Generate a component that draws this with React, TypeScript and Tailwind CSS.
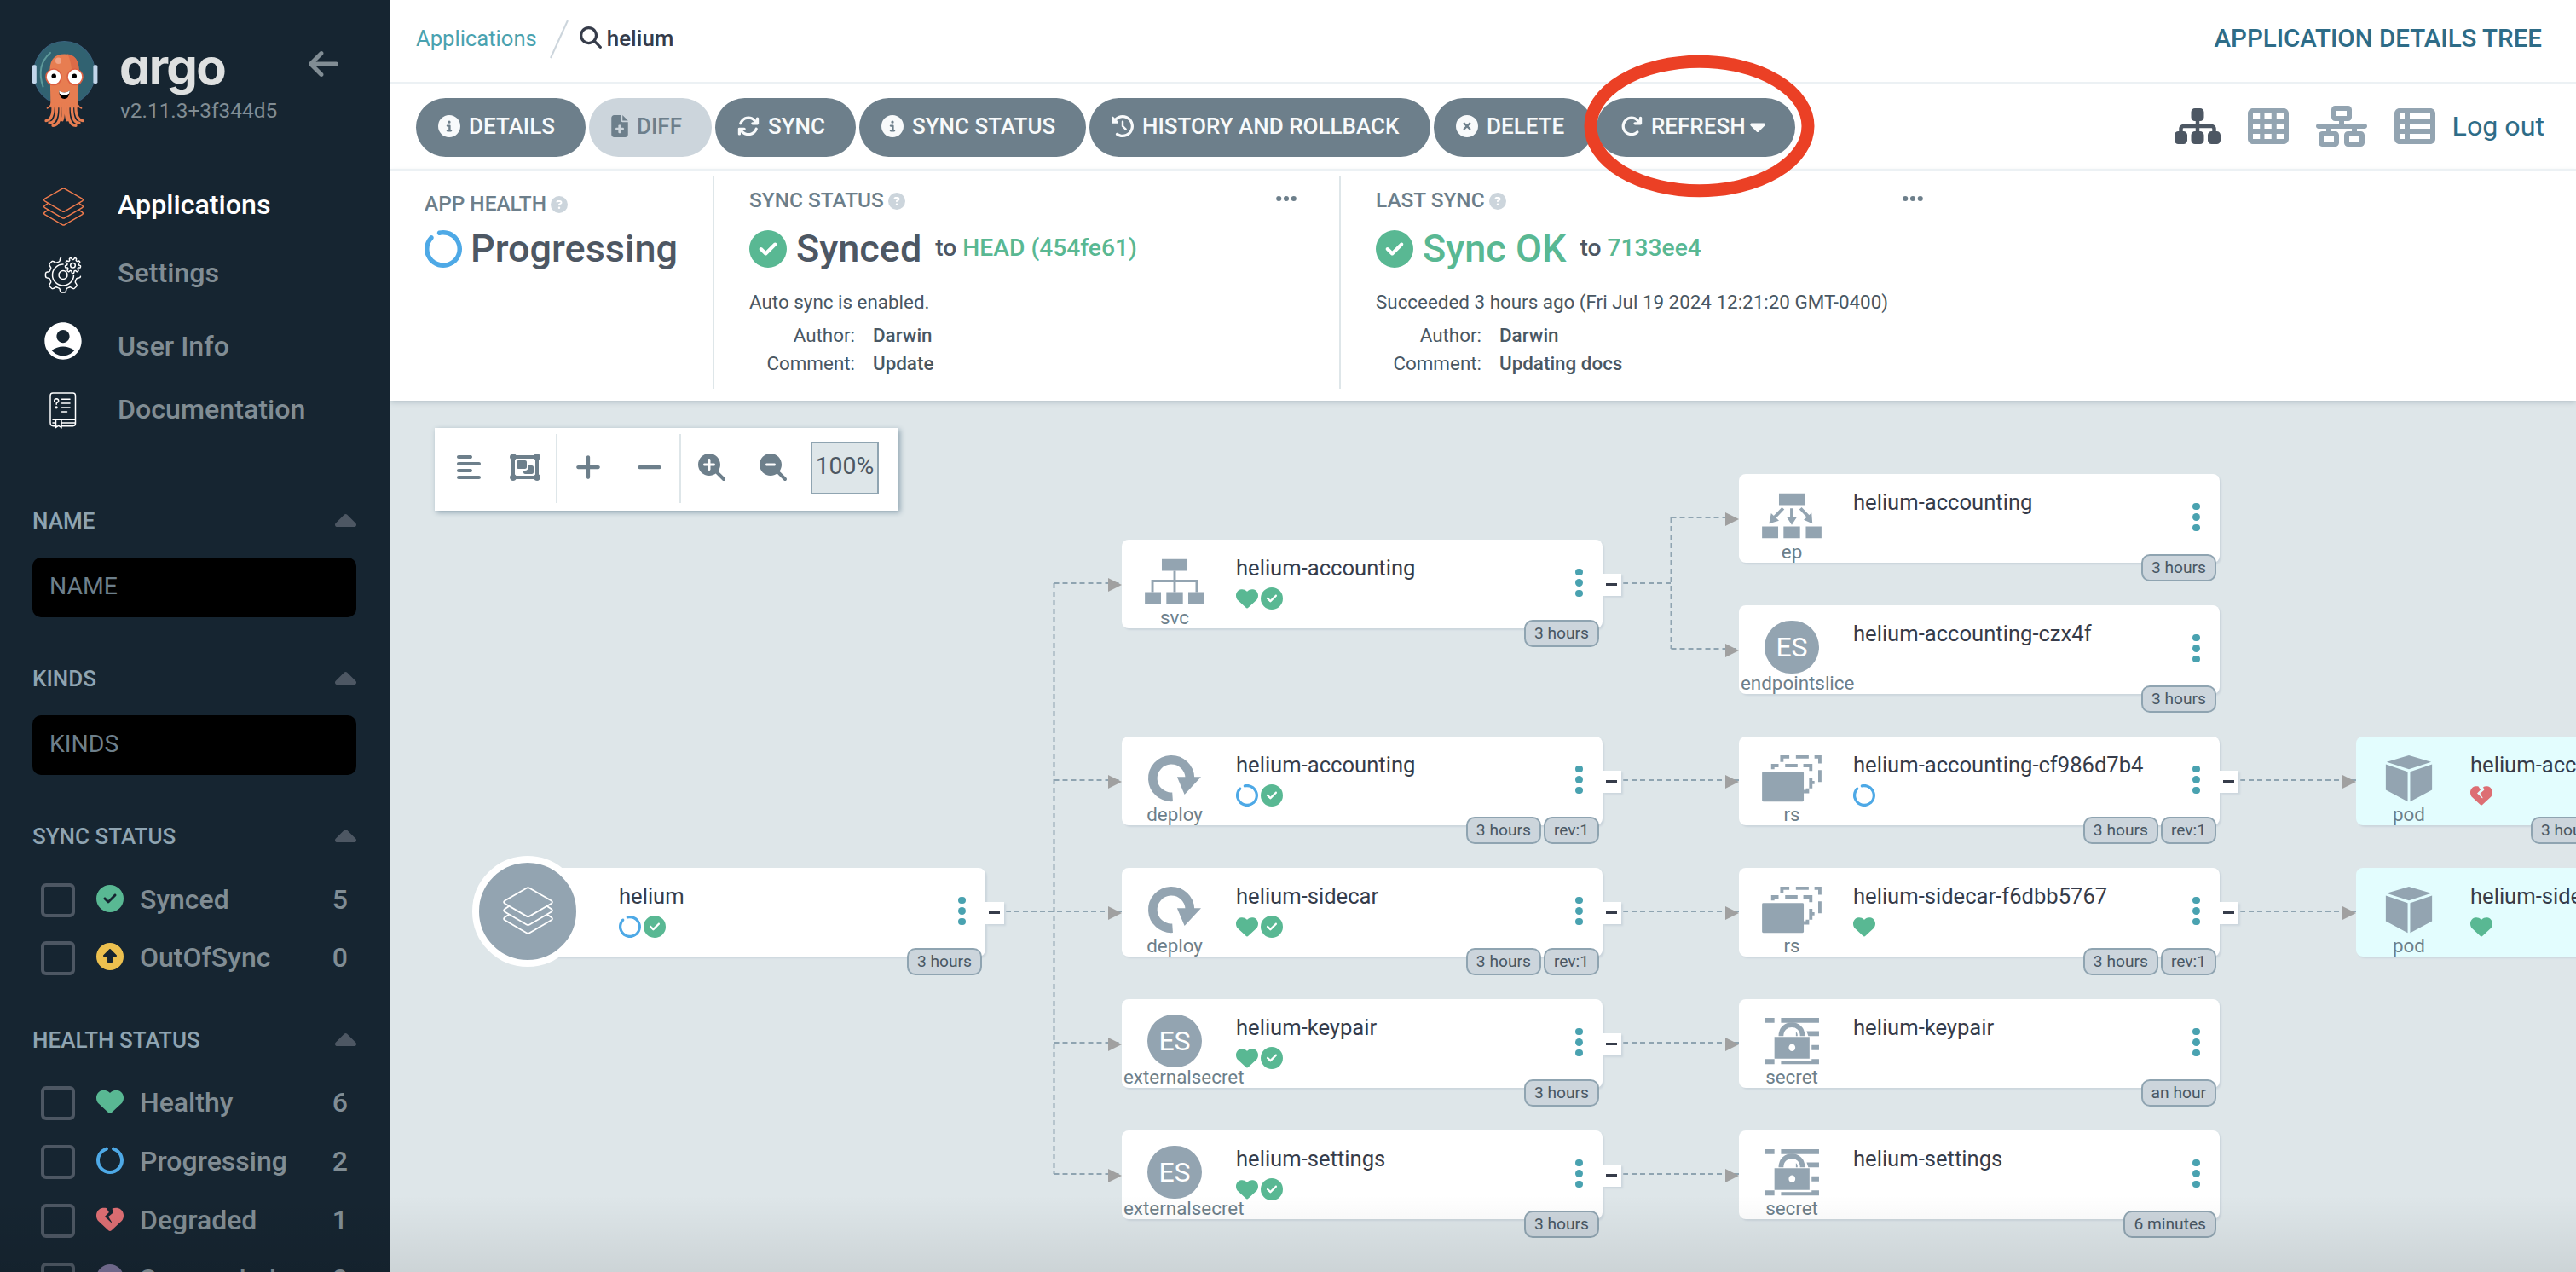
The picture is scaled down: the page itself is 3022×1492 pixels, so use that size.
import type { ReactNode } from 'react';
import {
  FaAlignLeft, FaArrowLeft, FaArrowRotateRight, FaArrowsRotate, FaCaretDown, FaCaretUp, FaCircleCheck,
  FaCircleInfo, FaCircleNotch, FaCircleQuestion, FaCircleUp, FaCirclePause, FaCircleXmark, FaClockRotateLeft,
  FaEllipsis, FaFileMedical, FaHeart, FaHeartCrack, FaMagnifyingGlass, FaMagnifyingGlassMinus,
  FaMagnifyingGlassPlus, FaMinus, FaNetworkWired, FaObjectGroup, FaPlus, FaSitemap, FaTableCells, FaTableList,
} from 'react-icons/fa6';
import { MdAccountCircle } from 'react-icons/md';

/* ---------- shared drawings ---------- */

function Layers({ className }: { className: string }) {
  return (
    <svg viewBox="0 0 46 44" className={className} fill="none" stroke="currentColor" strokeWidth="1.4" strokeLinejoin="round">
      <path d="M21.6 1.3 Q23 .5 24.4 1.3 L44.5 12.9 Q46.2 14.2 44.5 15.5 L24.4 27.2 Q23 28 21.6 27.2 L1.5 15.5 Q-.2 14.2 1.5 12.9 Z" />
      <path d="M5.4 18 L1.5 20.6 Q-.2 21.9 1.5 23.2 L21.6 34.9 Q23 35.7 24.4 34.9 L44.5 23.2 Q46.2 21.9 44.5 20.6 L40.6 18" />
      <path d="M5.4 25.7 L1.5 28.3 Q-.2 29.6 1.5 30.9 L21.6 42.6 Q23 43.4 24.4 42.6 L44.5 30.9 Q46.2 29.6 44.5 28.3 L40.6 25.7" />
    </svg>
  );
}

function gearPath(cx: number, cy: number, r: number, amp: number, teeth: number, from: number, to: number, phase: number) {
  const pts: string[] = [];
  for (let a = from; a <= to; a += 2) {
    const t = (a * Math.PI) / 180;
    const k = Math.tanh(2.6 * Math.cos(teeth * (t - phase)));
    const rad = r + amp * k;
    pts.push(`${(cx + rad * Math.cos(t)).toFixed(2)} ${(cy + rad * Math.sin(t)).toFixed(2)}`);
  }
  return 'M' + pts.join('L');
}

function Gears() {
  return (
    <svg viewBox="0 0 44 44" className="h-[44px] w-[44px]" fill="none" stroke="#fff" strokeWidth="1.5" strokeLinecap="round" strokeLinejoin="round">
      <path d={gearPath(22, 22.5, 18.4, 2.2, 8, 5, 264, Math.PI / 2)} />
      <path d="M22 10 A12.5 12.5 0 1 0 34.5 22.5" />
      <circle cx="22" cy="22.5" r="5" />
      <path d={gearPath(33.5, 11.3, 7.9, 1.2, 9, 0, 360, Math.PI / 2)} />
      <circle cx="33.5" cy="11.3" r="2.8" />
    </svg>
  );
}

function Manual() {
  return (
    <svg viewBox="0 0 32 42" preserveAspectRatio="none" className="h-[43px] w-[32px]" fill="none" stroke="#fff" strokeWidth="1.5" strokeLinecap="round">
      <path d="M4 31.5H30.5V4Q30.5 1 27.5 1H4Q1 1 1 4V35Q1 38.7 4.5 38.7H8M14 38.7H27.5Q30.5 38.7 30.5 35.7V31" />
      <path d="M7.5 31.8V40.5L10.7 38.5L14 40.5V31.8M14 35.2H30M4 35.2H7.5" />
      <path d="M14.5 8H24M14.5 12.8H24M14.5 17.6H24M14.5 22.4H20.5" />
      <path d="M5.7 10.2Q5.7 7.6 8.3 7.6Q10.8 7.8 10.7 10Q10.4 11.6 8.2 12.6V14" />
      <circle cx="8.1" cy="17.4" r=".9" fill="#fff" />
    </svg>
  );
}

function Mascot() {
  return (
    <svg viewBox="37 45 79 99" preserveAspectRatio="none" className="h-[102px] w-[79px]">
      <circle cx="75.5" cy="82.5" r="36" fill="#316271" stroke="#3b6480" strokeWidth="1" />
      <rect x="37.8" y="73.5" width="5" height="21" rx="1.6" fill="#c3d6ea" />
      <rect x="109.4" y="73.5" width="5" height="21" rx="1.6" fill="#c3d6ea" />
      <path d="M59 59.5Q42 74 50.5 98" fill="none" stroke="#5f9a9b" strokeWidth="2" strokeLinecap="round" />
      <path d="M58.5 78Q59 61 75.5 61Q92 61 92.5 78L91.5 122H59.5Z" fill="#e77d51" />
      <path d="M79 61Q92 62.500 92.500 78L92 90H85Q84 68 79 61Z" fill="#dd6b47" />
      <circle cx="68.500" cy="68.500" r="3.600" fill="#f0a386" />
      <g fill="none" stroke="#e77d51" strokeWidth="3.300" strokeLinecap="round">
        <path d="M61 112Q61 121 55.500 122.500" strokeWidth="1.8" />
        <path d="M90 112Q90 121 95.500 122.500" strokeWidth="1.8" />
        <path d="M62 118Q63 136 54 136.800" />
        <path d="M66.500 118Q67.500 139 58 139.400" />
        <path d="M71 118Q72.500 142 62 142.300" />
        <path d="M80 118Q78.500 142 89 142.300" />
        <path d="M84.500 118Q83.500 139 93 139.400" />
        <path d="M89 118Q88 136 97 136.800" />
        <path d="M74.500 118Q75 130 73 136" />
        <path d="M77.500 118Q76.500 130 79 136" />
      </g>
      <circle cx="63" cy="87" r="9" fill="#fff" stroke="#dc5f41" strokeWidth="1.6" />
      <circle cx="88" cy="87" r="9" fill="#fff" stroke="#dc5f41" strokeWidth="1.6" />
      <circle cx="63.200" cy="86" r="2.700" />
      <circle cx="87.300" cy="86" r="2.700" />
      <path d="M69 102.500Q75.500 107 82 102.500Q81 112 75.500 112Q70 112 69 102.500Z" />
      <path d="M69 102.500Q75.500 107 82 102.500L81 106Q75.500 110 70 106Z" fill="#fff" />
    </svg>
  );
}

/* ---------- sidebar ---------- */

function NavRow({ icon, label, className, active }: { icon: ReactNode; label: string; className: string; active?: boolean }) {
  return (
    <div className={`flex h-[60px] shrink-0 items-center pl-[48px] text-[32.200px] font-medium ${active ? 'text-white' : 'text-[#818d94]'} ${className}`}>
      <span className="flex w-[52px] justify-center">{icon}</span>
      <span className="ml-[38px]">{label}</span>
    </div>
  );
}

function SectionTitle({ label, className }: { label: string; className: string }) {
  return (
    <div className={`flex h-[30px] shrink-0 items-center justify-between pr-[40px] pl-[38px] text-[26px] font-medium text-[#8fa4b1] ${className}`}>
      <span>{label}</span>
      <FaCaretUp className="mt-[4px] h-[40px] w-[25px] text-[#4d5763]" />
    </div>
  );
}

function FilterInput({ label }: { label: string }) {
  return (
    <div className="mt-[28px] mr-[40px] ml-[38px] flex h-[70px] shrink-0 items-center rounded-[10px] bg-black pb-px pl-[20px] text-[28.400px] text-[#6d7f8b]">
      {label}
    </div>
  );
}

function FilterRow({ icon, label, count, className }: { icon: ReactNode; label: string; count: number; className: string }) {
  return (
    <div className={`flex h-[40px] shrink-0 items-center pr-[50px] pl-[48px] text-[32px] font-medium text-[#818d94] ${className}`}>
      <span className="h-[40px] w-[40px] rounded-[6px] border-[4px] border-[#4d5763]" />
      <span className="-mt-[4px] ml-[25px] flex w-[32px]">{icon}</span>
      <span className="-mt-[3px] ml-[19px] grow">{label}</span>
      <span className="-mt-[3px]">{count}</span>
    </div>
  );
}

function Sidebar() {
  return (
    <aside className="relative z-20 flex w-[458px] shrink-0 flex-col overflow-hidden bg-[#162531]">
      <div className="flex h-[210px] shrink-0 items-start pt-[47px] pl-[37px]">
        <Mascot />
        <div className="ml-[24px] flex w-[222px] flex-col">
          <span className="mt-[2px] h-[58px] text-[58px] leading-[58px] font-bold tracking-[-1.700px] text-[#dee0e0] [font-family:Inter,sans-serif] [font-feature-settings:'cv11']">argo</span>
          <span className="mt-[8px] ml-[1px] text-[24.400px] leading-[30px] text-[#818d94]">v2.11.3+3f344d5</span>
        </div>
        <FaArrowLeft className="mt-[8px] h-[40px] w-[35px] text-[#818d94]" />
      </div>
      <NavRow active icon={<Layers className="mt-[4px] h-[45px] w-[47px] text-[#ef7b4d]" />} label="Applications" className="" />
      <NavRow icon={<span className="mt-[4px]"><Gears /></span>} label="Settings" className="mt-[20px]" />
      <NavRow icon={<MdAccountCircle className="-mt-[12px] h-[52px] w-[52px] shrink-0 text-white" />} label="User Info" className="mt-[26px]" />
      <NavRow icon={<span className="mt-[3px]"><Manual /></span>} label="Documentation" className="mt-[14px]" />

      <SectionTitle label="NAME" className="mt-[86px]" />
      <FilterInput label="NAME" />
      <SectionTitle label="KINDS" className="mt-[57px]" />
      <FilterInput label="KINDS" />
      <SectionTitle label="SYNC STATUS" className="mt-[57px]" />
      <FilterRow icon={<FaCircleCheck className="h-[32px] w-[32px] text-[#59b893]" />} label="Synced" count={5} className="mt-[40px]" />
      <FilterRow icon={<FaCircleUp className="h-[32px] w-[32px] text-[#ecc04f]" />} label="OutOfSync" count={0} className="mt-[28px]" />
      <SectionTitle label="HEALTH STATUS" className="mt-[61px]" />
      <FilterRow icon={<FaHeart className="h-[32px] w-[32px] text-[#59b893]" />} label="Healthy" count={6} className="mt-[39px]" />
      <FilterRow icon={<FaCircleNotch className="h-[32px] w-[32px] text-[#4ea9e6]" />} label="Progressing" count={2} className="mt-[29px]" />
      <FilterRow icon={<FaHeartCrack className="h-[32px] w-[32px] text-[#dd6e73]" />} label="Degraded" count={1} className="mt-[29px]" />
      <FilterRow icon={<FaCirclePause className="h-[32px] w-[32px] text-[#766f94]" />} label="Suspended" count={0} className="mt-[29px]" />
    </aside>
  );
}

/* ---------- header ---------- */

function PillButton({ icon, label, className, children }: { icon: ReactNode; label: string; className: string; children?: ReactNode }) {
  return (
    <button className={`flex h-[69px] shrink-0 items-center rounded-[35px] pb-[2px] pl-[26px] text-[26px] font-medium whitespace-nowrap ${className}`}>
      {icon}
      <span className="ml-[10px]">{label}</span>
      {children}
    </button>
  );
}

const solid = 'bg-[#6d7f8b] text-[#f8fafb]';

function Toolbar() {
  const ic = 'h-[26px] w-[26px]';
  return (
    <div className="relative z-20 flex h-[102px] shrink-0 items-center justify-between border-b-2 border-[#ecf1f4] pt-[2px] pl-[30px]">
      <div className="relative flex gap-[4px]">
        <PillButton icon={<FaCircleInfo className={ic} />} label="DETAILS" className={`w-[199px] ${solid}`} />
        <PillButton icon={<FaFileMedical className="h-[26px] w-[20px]" />} label="DIFF" className="w-[144px] bg-[#ccd5dc] text-[#6d7f8b]" />
        <PillButton icon={<FaArrowsRotate className={ic} />} label="SYNC" className={`w-[165px] ${solid}`} />
        <PillButton icon={<FaCircleInfo className={ic} />} label="SYNC STATUS" className={`w-[266px] ${solid}`} />
        <PillButton icon={<FaClockRotateLeft className={ic} />} label="HISTORY AND ROLLBACK" className={`w-[400px] ${solid}`} />
        <PillButton icon={<FaCircleXmark className={ic} />} label="DELETE" className={`w-[187px] ${solid}`} />
        <PillButton icon={<FaArrowRotateRight className={`ml-[2px] ${ic}`} />} label="REFRESH" className={`w-[233px] ${solid}`}>
          <FaCaretDown className="ml-[5px] h-[28px] w-[18px]" />
        </PillButton>
        <svg viewBox="0 0 272 170" className="pointer-events-none absolute top-[-52px] left-[1370px] h-[170px] w-[272px]" fill="none">
          <ellipse cx="135.500" cy="85" rx="127.500" ry="75.800" stroke="#eb4025" strokeWidth="15" />
        </svg>
      </div>
      <div className="flex items-center pr-[37px] pb-[3px] text-[#93a4b1]">
        <FaSitemap className="h-[48px] w-[54px] text-[#4d5763]" />
        <FaTableCells className="ml-[32px] h-[48px] w-[48px]" />
        <FaNetworkWired className="ml-[32px] h-[48px] w-[60px]" />
        <FaTableList className="ml-[32px] h-[48px] w-[48px]" />
        <span className="ml-[20px] text-[32.200px] leading-[40px] text-[#2e6c87]">Log out</span>
      </div>
    </div>
  );
}

function Label({ text, className }: { text: string; className: string }) {
  return (
    <div className={`flex h-[30px] items-center text-[24.400px] font-medium text-[#6d7f8b] ${className}`}>
      {text}
      <FaCircleQuestion className="mt-[2px] ml-[5px] h-[20px] w-[20px] text-[#ccd5dc]" />
    </div>
  );
}

function Detail({ name, value }: { name: string; value: string }) {
  return (
    <div className="flex h-[33px] items-center gap-[21px]">
      <span className="w-[124px] text-right">{name}</span>
      <span className="font-medium">{value}</span>
    </div>
  );
}

function StatusPanel() {
  return (
    <div className="relative z-10 flex h-[270px] shrink-0 bg-white pt-[6px] text-[22.400px] text-[#495763] shadow-[0_2px_6px_#b6c2c9]">
      <div className="h-[250px] w-[380px] border-r-2 border-[#dee6e9] pl-[40px]">
        <Label text="APP HEALTH" className="mt-[18px]" />
        <div className="mt-[13px] flex h-[50px] items-center text-[45px] font-medium text-[#4d5763]">
          <FaCircleNotch className="mr-[10px] h-[44px] w-[44px] rotate-[-30deg] text-[#4ea9e6]" />
          Progressing
        </div>
      </div>
      <div className="h-[250px] w-[735px] border-r-2 border-[#dee6e9] pl-[41px]">
        <div className="flex items-center justify-between">
          <Label text="SYNC STATUS" className="mt-[14px]" />
          <FaEllipsis className="mt-[10px] mr-[48px] h-[28px] w-[28px] text-[#6d7f8b]" />
        </div>
        <div className="mt-[17px] flex h-[50px] items-center text-[45px] font-medium text-[#4d5763]">
          <FaCircleCheck className="mr-[11px] h-[44px] w-[44px] text-[#59b893]" />
          Synced
          <span className="-mt-px ml-[16px] text-[28.200px]">to <span className="text-[#59b893]">HEAD (454fe61)</span></span>
        </div>
        <div className="mt-[23px] flex h-[30px] items-center">Auto sync is enabled.</div>
        <div className="mt-[7px]">
          <Detail name="Author:" value="Darwin" />
          <Detail name="Comment:" value="Update" />
        </div>
      </div>
      <div className="h-[250px] w-[735px] pl-[41px]">
        <div className="flex items-center justify-between">
          <Label text="LAST SYNC" className="mt-[14px]" />
          <FaEllipsis className="mt-[10px] mr-[50px] h-[28px] w-[28px] text-[#6d7f8b]" />
        </div>
        <div className="mt-[17px] flex h-[50px] items-center text-[45px] font-medium text-[#59b893]">
          <FaCircleCheck className="mr-[11px] h-[44px] w-[44px]" />
          Sync OK
          <span className="-mt-px ml-[16px] text-[28.200px] text-[#4d5763]">to <span className="text-[#59b893]">7133ee4</span></span>
        </div>
        <div className="mt-[23px] flex h-[30px] items-center">Succeeded 3 hours ago (Fri Jul 19 2024 12:21:20 GMT-0400)</div>
        <div className="mt-[7px]">
          <Detail name="Author:" value="Darwin" />
          <Detail name="Comment:" value="Updating docs" />
        </div>
      </div>
    </div>
  );
}

/* ---------- resource tree ---------- */

type Kind = 'app' | 'svc' | 'deploy' | 'es' | 'ep' | 'rs' | 'pod' | 'secret';
type Status = 'healthy' | 'progressing' | 'degraded' | 'synced';
interface TreeNode {
  x: number;
  y: number;
  kind: Kind;
  label: string;
  name: string;
  status: Status[];
  tags: string[];
  collapsible?: boolean;
}

const C1 = 134, C2 = 858, C3 = 1582, C4 = 2306;

const nodes: TreeNode[] = [
  { x: C1, y: 548, kind: 'app', label: '', name: 'helium', status: ['progressing', 'synced'], tags: ['3 hours'], collapsible: true },
  { x: C2, y: 163, kind: 'svc', label: 'svc', name: 'helium-accounting', status: ['healthy', 'synced'], tags: ['3 hours'], collapsible: true },
  { x: C2, y: 394, kind: 'deploy', label: 'deploy', name: 'helium-accounting', status: ['progressing', 'synced'], tags: ['3 hours', 'rev:1'], collapsible: true },
  { x: C2, y: 548, kind: 'deploy', label: 'deploy', name: 'helium-sidecar', status: ['healthy', 'synced'], tags: ['3 hours', 'rev:1'], collapsible: true },
  { x: C2, y: 702, kind: 'es', label: 'externalsecret', name: 'helium-keypair', status: ['healthy', 'synced'], tags: ['3 hours'], collapsible: true },
  { x: C2, y: 856, kind: 'es', label: 'externalsecret', name: 'helium-settings', status: ['healthy', 'synced'], tags: ['3 hours'], collapsible: true },
  { x: C3, y: 86, kind: 'ep', label: 'ep', name: 'helium-accounting', status: [], tags: ['3 hours'] },
  { x: C3, y: 240, kind: 'es', label: 'endpointslice', name: 'helium-accounting-czx4f', status: [], tags: ['3 hours'] },
  { x: C3, y: 394, kind: 'rs', label: 'rs', name: 'helium-accounting-cf986d7b4', status: ['progressing'], tags: ['3 hours', 'rev:1'], collapsible: true },
  { x: C3, y: 548, kind: 'rs', label: 'rs', name: 'helium-sidecar-f6dbb5767', status: ['healthy'], tags: ['3 hours', 'rev:1'], collapsible: true },
  { x: C3, y: 702, kind: 'secret', label: 'secret', name: 'helium-keypair', status: [], tags: ['an hour'] },
  { x: C3, y: 856, kind: 'secret', label: 'secret', name: 'helium-settings', status: [], tags: ['6 minutes'] },
  { x: C4, y: 394, kind: 'pod', label: 'pod', name: 'helium-accounting', status: ['degraded'], tags: ['3 hours'] },
  { x: C4, y: 548, kind: 'pod', label: 'pod', name: 'helium-sidecar', status: ['healthy'], tags: [] },
];

function KindIcon({ kind }: { kind: Kind }) {
  if (kind === 'es') {
    return <div className="flex h-[64px] w-[64px] items-center justify-center rounded-full bg-[#93a4b1] text-[32px] text-white">ES</div>;
  }
  return (
    <svg viewBox="0 0 72 64" className="h-[64px] w-[72px]" fill="#93a4b1">
      {kind === 'svc' && (
        <>
          <path d="M20.500 5H51.500V19H20.500ZM0 45H19.500V59H0ZM26 45H46V59H26ZM52.500 45H72V59H52.500Z" />
          <path d="M9.200 45V31.500H62.800V45M36 19V45" fill="none" stroke="#93a4b1" strokeWidth="3" />
        </>
      )}
      {kind === 'ep' && (
        <>
          <path d="M20.500 5H51.500V19H20.500ZM0 45H19.500V59H0ZM26 45H46V59H26ZM53 45H72V59H53Z" />
          <path d="M36 23V36M25.500 23L15 34M46.500 23L57 34" fill="none" stroke="#93a4b1" strokeWidth="4" />
          <path d="M29.500 33H42.500L36 43ZM8.500 41.500L11 29L20.500 38ZM61 41.500L50.500 37L60 28.500Z" />
        </>
      )}
      {kind === 'deploy' && (
        <>
          <path d="M33.500 54.500A22.500 22.500 0 1 1 54.500 31.500" fill="none" stroke="#93a4b1" strokeWidth="11" />
          <path d="M39 30.300H68L48 51.500Z" />
        </>
      )}
      {kind === 'rs' && (
        <>
          <rect x="0" y="24" width="50.500" height="36" rx="1.500" />
          <path
            d="M24 12V6H33M41 6H56.500M63.500 6H70V14M70 22V36.500M13 21V16.500H20M28 16.500H43M50 16.500H59V23M59 31V44M59 37H63.500M50.500 48H55V44"
            fill="none" stroke="#93a4b1" strokeWidth="4"
          />
        </>
      )}
      {kind === 'pod' && <path d="M36 4L63 12L36 21L9 12ZM8 15L34.500 24V60L8 46ZM37.500 24L64 15V46L37.500 60Z" />}
      {kind === 'secret' && (
        <>
          <path d="M3 4H15V10H3ZM23 4H69V10H23ZM54 20H69V26H56ZM60 37H69V43H60ZM60 54H69V60H23V56H60ZM3 54H15V60H3Z" />
          <path d="M23 26C23 8 49 8 49 26" fill="none" stroke="#93a4b1" strokeWidth="6" />
          <path d="M41 21Q43 22 43 26H41Z" />
          <path d="M15 27H57.500V53.500H15Z" />
          <ellipse cx="36.300" cy="40" rx="4" ry="4.500" fill="#fff" />
        </>
      )}
    </svg>
  );
}

function StatusIcon({ status }: { status: Status }) {
  const s = 'h-[26px] w-[26px]';
  if (status === 'healthy') return <FaHeart className={`${s} text-[#59b893]`} />;
  if (status === 'degraded') return <FaHeartCrack className={`${s} text-[#dd6e73]`} />;
  if (status === 'synced') return <FaCircleCheck className={`${s} text-[#59b893]`} />;
  return <FaCircleNotch className={`${s} rotate-[-30deg] text-[#4ea9e6]`} />;
}

function NodeCard({ node }: { node: TreeNode }) {
  const pod = node.kind === 'pod';
  return (
    <div
      className={`absolute flex h-[104px] w-[564px] rounded-[8px] shadow-[2px_2px_2px_#ccd6dd] ${pod ? 'bg-[#e3fdfe]' : 'bg-white'}`}
      style={{ left: node.x, top: node.y }}
    >
      {node.kind === 'app' ? (
        <div className="absolute top-[-14px] left-[-38px] flex h-[130px] w-[130px] items-center justify-center rounded-full border-[8px] border-white bg-[#93a4b1]">
          <Layers className="mt-[-2px] h-[56px] w-[59px] text-white" />
        </div>
      ) : (
        <div className="ml-[2px] flex w-[120px] flex-col items-center pt-[18px]">
          <KindIcon kind={node.kind} />
          <div className="-mt-[2px] flex h-[26px] w-[120px] justify-center-safe text-[22.400px] leading-[26px] text-[#6d7f8b]">{node.label}</div>
        </div>
      )}
      <div className={`flex grow flex-col pt-[18px] ${node.kind === 'app' ? 'ml-[133px]' : 'ml-[11px]'}`}>
        <div className="ml-px h-[30px] text-[25.600px] leading-[30px] whitespace-nowrap text-[#363c4a]">{node.name}</div>
        <div className="mt-[8px] ml-px flex gap-[3px]">
          {node.status.map((s) => <StatusIcon key={s} status={s} />)}
        </div>
      </div>
      <div className="mr-[23px] flex w-[9px] shrink-0 flex-col justify-center gap-[4px] pb-[3px]">
        <span className="h-[8.500px] w-[8.500px] rounded-full bg-[#49a2b0]" />
        <span className="h-[8.500px] w-[8.500px] rounded-full bg-[#49a2b0]" />
        <span className="h-[8.500px] w-[8.500px] rounded-full bg-[#49a2b0]" />
      </div>
      {node.collapsible && (
        <div className="absolute top-[40px] left-[564px] flex h-[26px] w-[22px] items-center justify-center bg-white pr-[1px] pb-[2px] shadow-[2px_2px_2px_#ccd6dd]">
          <span className="h-[3px] w-[13px] bg-[#363c4a]" />
        </div>
      )}
      <div className={`absolute top-[94px] flex gap-[3px] ${pod ? 'left-[205px]' : 'right-[4px]'}`}>
        {node.tags.map((t) => (
          <span key={t} className="flex h-[32px] items-center rounded-[10px] border-2 border-[#8fa4b1] bg-[#ccd5dc] px-[10px] text-[19.200px] whitespace-nowrap text-[#495763]">
            {t}
          </span>
        ))}
      </div>
    </div>
  );
}

const rowsY = [445, 599, 753, 907];
const edges = [
  'M722 599H858', 'M778.500 214V907', 'M778.500 214H858', 'M778.500 445H858', 'M778.500 753H858', 'M778.500 907H858',
  'M1446 214H1502', 'M1502.500 137V291', 'M1502.500 137H1582', 'M1502.500 291H1582',
  ...rowsY.map((y) => `M1446 ${y}H1582`),
  'M2170 445H2306', 'M2170 599H2306',
];
const arrows: [number, number][] = [
  ...[214, ...rowsY].map((y): [number, number] => [842, y]),
  ...[137, 291, ...rowsY].map((y): [number, number] => [1566, y]),
  [2290, 445], [2290, 599],
];

function ZoomBar() {
  const ic = 'h-[32px] w-[32px]';
  return (
    <div className="absolute top-[32px] left-[52px] flex h-[97px] w-[544px] items-center bg-white pb-[5px] text-[#6d7f8b] shadow-[2px_2px_6px_#8fa4b1]">
      <FaAlignLeft className="ml-[26px] h-[32px] w-[28px]" />
      <FaObjectGroup className="ml-[34px] h-[32px] w-[36px]" />
      <span className="mt-[3px] ml-[18px] h-[81px] w-[2px] bg-[#dee6e9]" />
      <FaPlus className="ml-[21px] h-[34px] w-[30px]" />
      <FaMinus className="ml-[42px] h-[34px] w-[30px]" />
      <span className="mt-[3px] ml-[20px] h-[81px] w-[2px] bg-[#dee6e9]" />
      <FaMagnifyingGlassPlus className={`ml-[20px] ${ic}`} />
      <FaMagnifyingGlassMinus className={`ml-[40px] ${ic}`} />
      <span className="mt-[2px] ml-[28px] flex h-[62px] w-[80px] items-center justify-center border-2 border-[#8fa4b1] bg-[#dee6e9] pb-[3px] text-[28.400px] text-[#4d5763]">100%</span>
    </div>
  );
}

function ResourceTree() {
  return (
    <div className="relative grow overflow-hidden bg-[#dee6e9]">
      <svg className="absolute inset-0 h-full w-full" fill="none" stroke="#8fa4b1" strokeWidth="2" strokeDasharray="6 4">
        {edges.map((d) => <path key={d} d={d} />)}
        {arrows.map(([x, y]) => (
          <path key={`${x}-${y}`} d={`M${x} ${y - 6}L${x + 16} ${y + 2}L${x} ${y + 10}Z`} fill="#a0a0a0" stroke="none" />
        ))}
      </svg>
      {nodes.map((n) => <NodeCard key={`${n.x}-${n.y}`} node={n} />)}
      <ZoomBar />
    </div>
  );
}

export default function App() {
  return (
    <div className="relative flex h-[1492px] w-[3022px] overflow-hidden bg-white [font-family:Roboto,sans-serif]">
      <Sidebar />
      <main className="flex w-[2564px] flex-col">
        <div className="flex h-[98px] shrink-0 items-center justify-between border-b-2 border-[#ecf1f4] pr-[40px] pb-[5px] pl-[30px] text-[26px]">
          <div className="flex items-center">
            <span className="text-[25.600px] text-[#49a2b0]">Applications</span>
            <svg viewBox="0 0 22 46" className="ml-[15px] h-[46px] w-[22px]" stroke="#ccd5dc" strokeWidth="2"><path d="M1 45L21 1" /></svg>
            <FaMagnifyingGlass className="-mt-[3px] ml-[13px] h-[26px] w-[26px] text-[#363c4a]" />
            <span className="ml-[6px] font-medium text-[#363c4a]">helium</span>
          </div>
          <span className="text-[29.500px] font-medium text-[#2e6c87]">APPLICATION DETAILS TREE</span>
        </div>
        <Toolbar />
        <StatusPanel />
        <ResourceTree />
      </main>
      <div className="pointer-events-none absolute inset-x-0 bottom-0 z-30 h-[90px] bg-gradient-to-t from-black/8 to-transparent" />
    </div>
  );
}
